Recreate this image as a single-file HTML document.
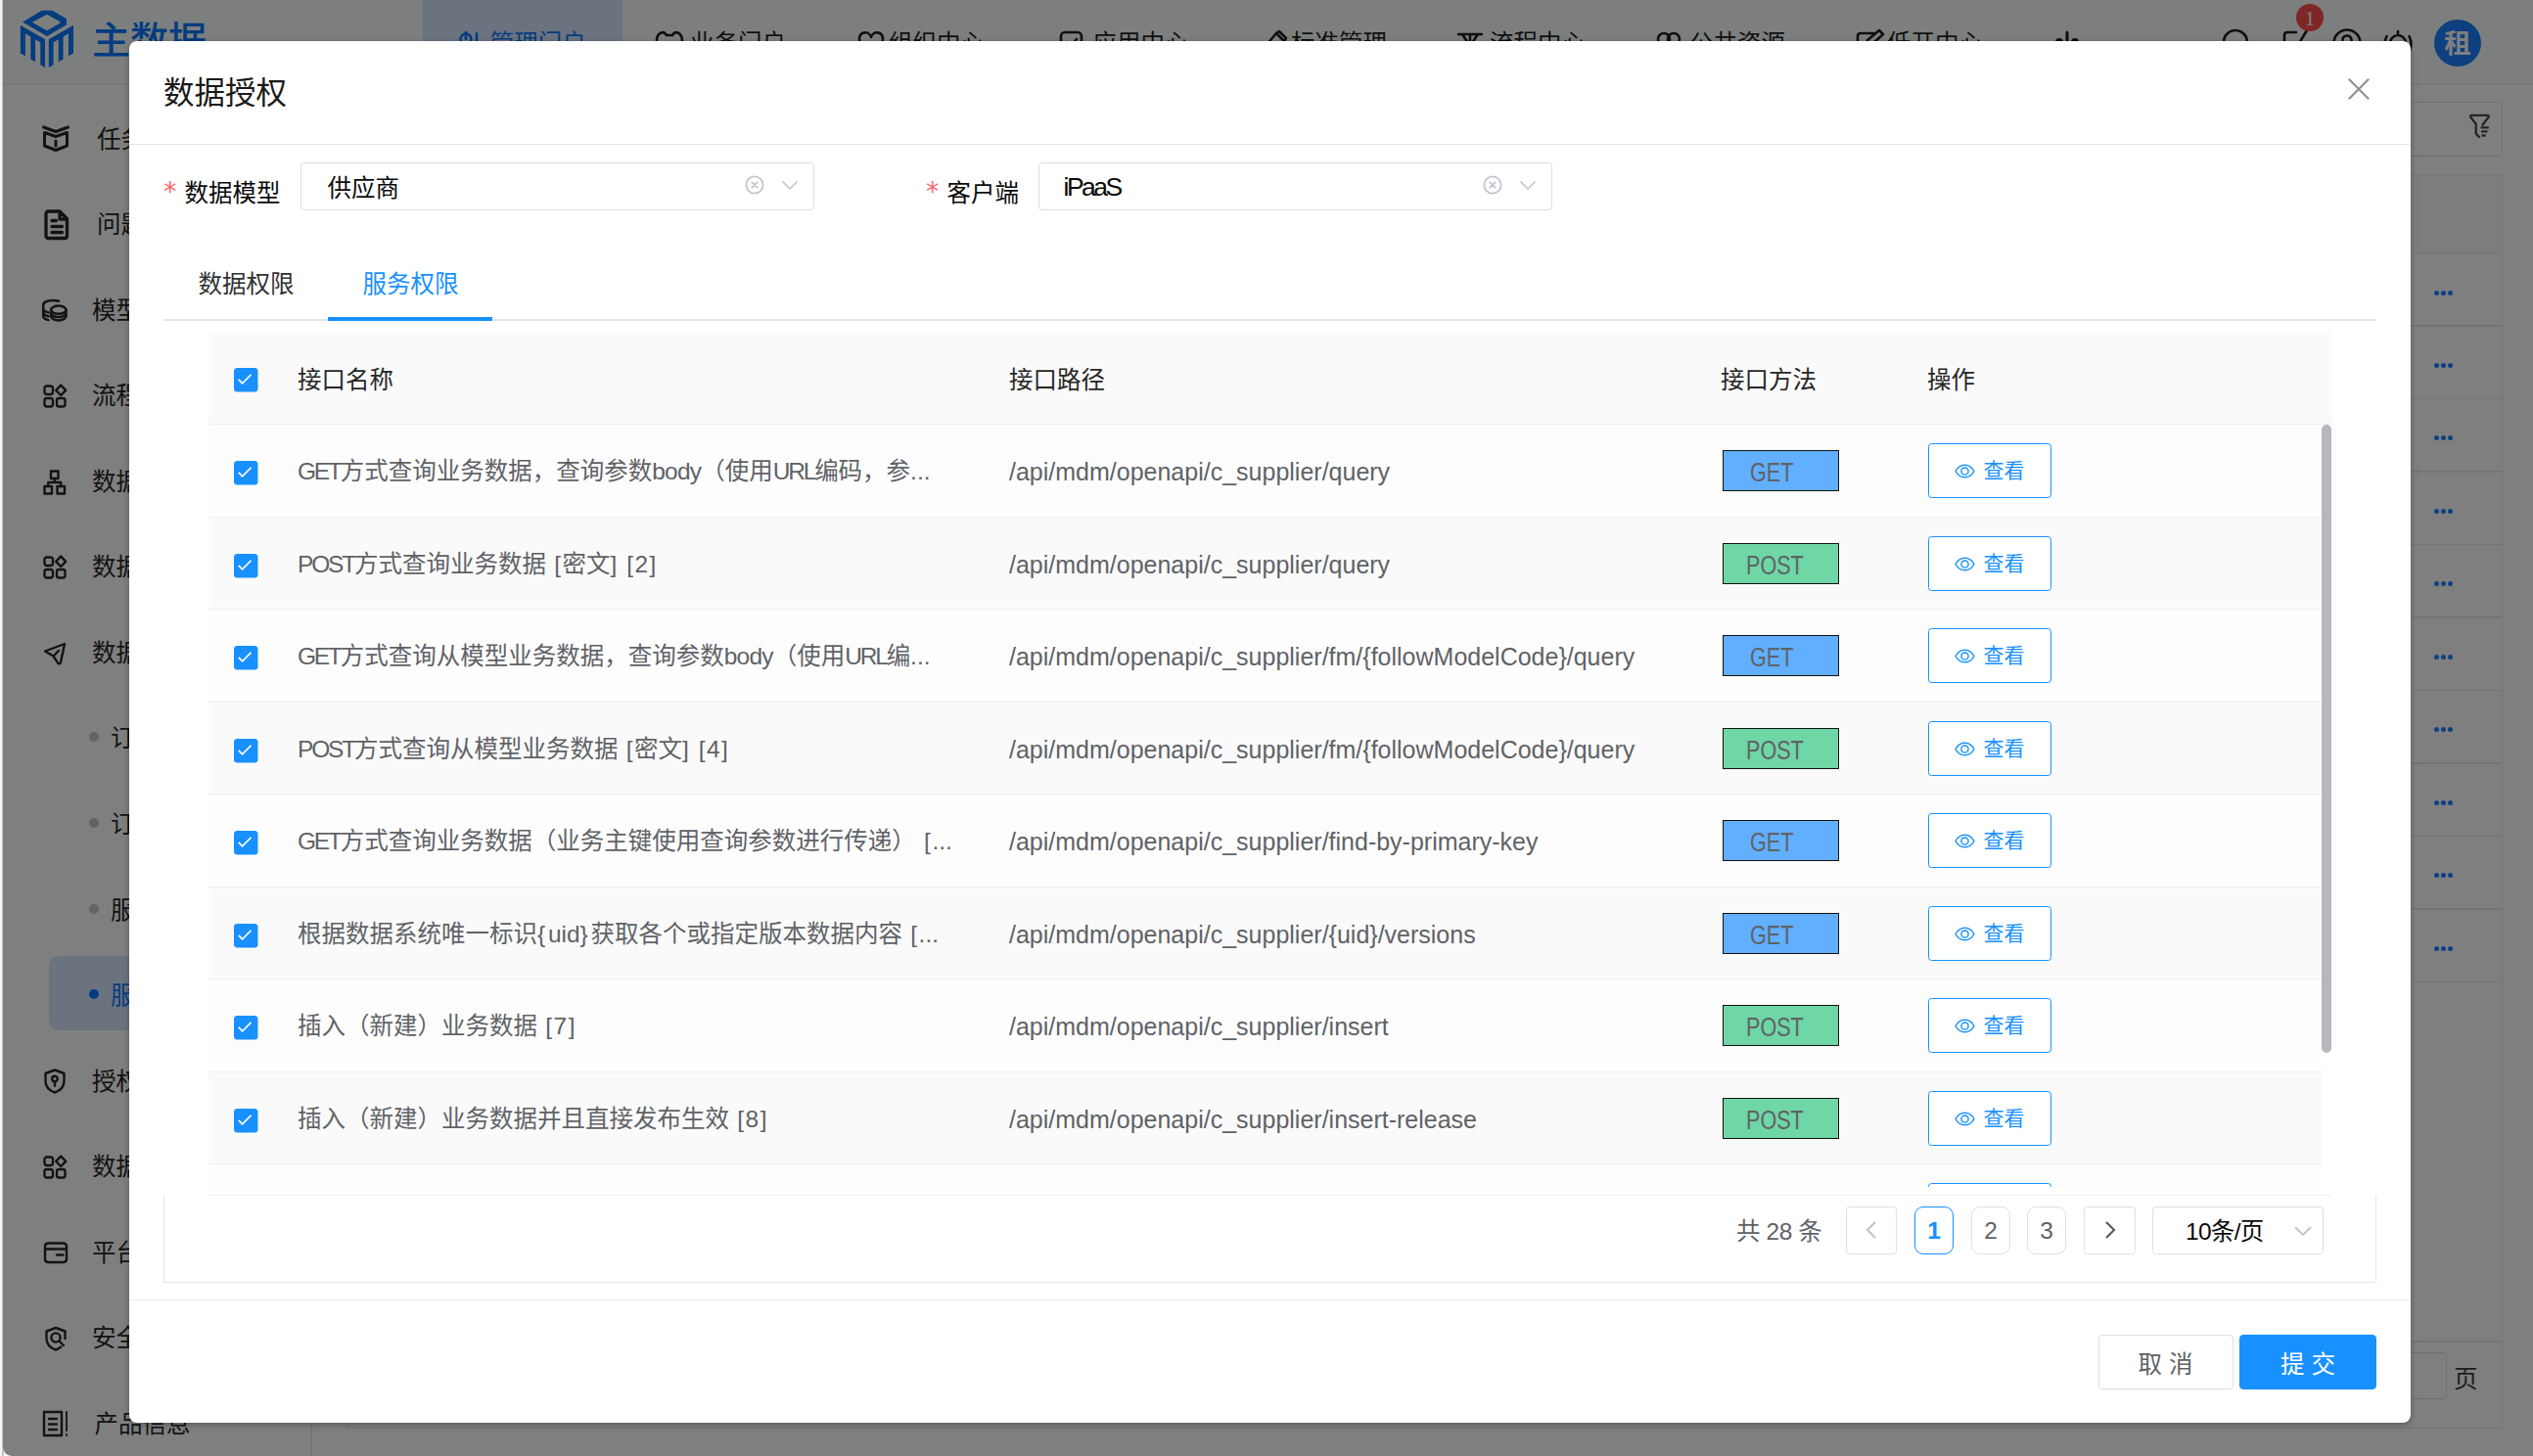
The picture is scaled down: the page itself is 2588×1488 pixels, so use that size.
<!DOCTYPE html>
<html lang="zh-CN">
<head>
<meta charset="utf-8">
<title>数据授权</title>
<style>
*{box-sizing:border-box;margin:0;padding:0}
html,body{width:2588px;height:1488px;overflow:hidden;background:#fff}
body{font-family:"Liberation Sans","Noto Sans CJK SC",sans-serif;font-size:24.5px;color:#303133;position:relative}
.abs{position:absolute}
svg{display:block;overflow:visible}
/* ---------- background app ---------- */
#app{position:absolute;left:3px;top:0;width:2585px;height:1488px;background:#fff;overflow:hidden;border-bottom-left-radius:9px}
#edge{position:absolute;left:0;top:0;width:4px;height:1488px;background:#f4f4f4;border-right:2.500px solid #c2c2c2}
#hdr{position:absolute;left:0;top:0;width:2585px;height:86px;background:#fbfffd;border-bottom:1.500px solid #e4e4e4}
#brand{position:absolute;left:91px;top:12.500px;font-size:39px;font-weight:500;color:#0a78ff;line-height:57px;white-space:nowrap;letter-spacing:0}
.nav{position:absolute;top:0;height:84px;width:204px;white-space:nowrap;font-size:24.5px;color:#1f1f1f;line-height:84px}
.nav.on{background:#d6e6fe;color:#0a78ff}
.nav span{position:absolute;top:3.400px}
.nav svg{position:absolute}
#side{position:absolute;left:0;top:87.500px;width:316px;height:1402px;background:#fff;border-right:2px solid #ececec}
.mi{position:absolute;left:0;width:316px;height:87.4px;line-height:87.4px;font-size:24.5px;color:#262626;white-space:nowrap}
.mi span{position:absolute;left:92px;top:0}
.mi svg{position:absolute;left:39px;top:29px}
.mi.sub{font-size:24.5px}
.mi.sub span{left:110px}
.mi.sub i{position:absolute;left:88px;top:37px;width:10px;height:10px;border-radius:50%;background:#c6c6c6}
.mi.cur{color:#0a78ff}
.mi.cur i{background:#0a78ff}
#curbg{position:absolute;left:47px;top:889.500px;width:262px;height:75.5px;border-radius:10px;background:#d6e6fe}
.dots{width:20px;height:5px}.dots i{position:absolute;top:0;width:5px;height:5px;border-radius:50%;background:#1a82ff}.dots i:nth-child(1){left:0}.dots i:nth-child(2){left:7px}.dots i:nth-child(3){left:14px}
/* ---------- overlay + modal ---------- */
#mask{position:absolute;left:3px;top:0;width:2585px;height:1488px;background:rgba(0,0,0,.5);border-bottom-left-radius:9px}
#dlg{position:absolute;left:132px;top:42px;width:2331px;height:1412px;background:#fff;border-radius:8px;box-shadow:0 2px 6px rgba(0,0,0,.3);overflow:hidden;color:#000}

.ttl{font-size:31.500px;line-height:50px;color:#1a1a1a;white-space:nowrap}
.hl{height:1.500px;background:#e4e7ed}
.lbl{font-size:24.500px;line-height:49px;color:#0a0a0a;white-space:nowrap;padding-top:7px;padding-left:21.500px}
.lbl b{position:absolute;left:0;top:5px;color:#f56c6c;font-weight:400;font-size:27px;font-family:"DejaVu Sans","Liberation Sans",sans-serif}
.sel{width:525px;height:49px;border:1.500px solid #dcdfe4;border-radius:3.500px;font-size:24.500px;line-height:46px;color:#0a0a0a}
.sel span{position:absolute;left:26.500px;top:2.500px;white-space:nowrap}
.tab{font-size:24.500px;line-height:50px;color:#303133;white-space:nowrap}
.tab.on{color:#1890ff}

.tr{position:absolute;left:0;width:2159px;height:94.500px;background:#fdfdfe;border-bottom:1px solid #ebeef5;font-size:24.500px;color:#606266;white-space:nowrap}
.tr.ev{background:#fafafa}
.tr.th{background:#fafafa;color:#262626}
.tr>div{position:absolute;top:-1px;height:94px;line-height:97px;overflow:hidden}
.th>div{top:0}
.u{letter-spacing:-2.200px}.w{letter-spacing:-.800px}.k{letter-spacing:1.500px}
.c0{left:26px;width:30px}
.ck{position:absolute;left:0;top:38px}
.th .ck{top:36px}
.c1{left:91px;width:700px}
.c2{left:818px;width:720px}
.tr:not(.th) .c2{font-size:25px;line-height:98px}
.c3{left:1545px;width:200px}
.c4{left:1756px;width:300px}
.tag{position:absolute;left:2px;top:27px;width:119px;height:42px;border:1.300px solid #111;font-size:27px;line-height:42px;color:#606266;white-space:nowrap}
.tag b{position:absolute;left:0;top:1px;font-weight:400;transform:scaleX(.8);transform-origin:0 50%}
.tag.get{background:#61affe}
.tag.get b{left:26.500px}
.tag.post{background:#6fd6a6}
.tag.post b{left:23px}
.vb{position:absolute;left:1px;top:20px;width:126px;height:56px;border:1.500px solid #1890ff;border-radius:3.500px;background:#fff;color:#1890ff;font-size:21px;line-height:53px}
.vb svg{position:absolute;left:26px;top:16.500px}
.vb em{position:absolute;left:55.500px;top:0;font-style:normal}

.pg-t{font-size:24.500px;line-height:52px;letter-spacing:-.400px;margin-left:-1px;color:#606266;white-space:nowrap}
.pg-b{height:49px;border:1.500px solid #dcdfe6;border-radius:9px;font-size:24.500px;line-height:47.500px;text-align:center;color:#606266;background:#fff}
.pg-b.on{border-color:#1890ff;color:#1890ff;font-weight:700}
.pg-b svg{margin:13px auto 0}
.pg-b.ar{border-radius:3.500px}
.pg-s{width:175px;height:49px;border:1.500px solid #dcdfe6;border-radius:3.500px;font-size:24.500px;line-height:50px;letter-spacing:-.700px;color:#0a0a0a}
.pg-s span{position:absolute;left:33px;top:0;white-space:nowrap}
.btn{height:56px;border:1.500px solid #dcdfe6;border-radius:4px;background:#fff;color:#606266;font-size:24.500px;line-height:59.500px;text-align:center;white-space:nowrap;overflow:hidden}
.btn.pri{background:#1890ff;border-color:#1890ff;color:#fff}
</style>
</head>
<body>
<div id="edge"></div>
<div id="app">
  <div id="hdr">
<svg class="abs" style="left:7px;top:0" width="80" height="85" viewBox="0 0 920.8 978.35" fill="#0a78ff">
<path d="M125,295 L415,462 L415,795 L360,763 L360,497 L300,463 L300,728 L245,696 L245,431 L183,395 L183,660 L125,627 Z"/>
<path d="M748,295 L458,462 L458,795 L513,763 L513,497 L573,463 L573,728 L628,696 L628,431 L690,395 L690,660 L748,627 Z"/>
<path fill-rule="evenodd" d="M150,258 L375,125 L500,125 L668,222 L668,292 L437,425 Z M262,262 L437,360 L592,270 L592,255 L437,170 Z"/>
</svg>
<div id="brand">主数据</div>
<div class="nav on" style="left:429.0px"><svg style="left:37.0px;top:29px" width="30" height="30" viewBox="0 0 30 30" fill="none" stroke="#0a78ff" stroke-width="2.600" stroke-linecap="round" stroke-linejoin="round"><circle cx="7" cy="11" r="5.500"/><path d="M7 4v7M18 5v20h7" /></svg><span style="left:68.7px">管理门户</span></div>
<div class="nav" style="left:632.6px"><svg style="left:33.4px;top:29px" width="30" height="30" viewBox="0 0 30 30" fill="none" stroke="#1f1f1f" stroke-width="2.600" stroke-linecap="round" stroke-linejoin="round"><path d="M2 13c0-9 7-11 10-6h6c3-5 10-3 10 6v8c0 4-3 6-6 6H8c-3 0-6-2-6-6z" /></svg><span style="left:69.4px">业务门户</span></div>
<div class="nav" style="left:836.0px"><svg style="left:37.0px;top:29px" width="30" height="30" viewBox="0 0 30 30" fill="none" stroke="#1f1f1f" stroke-width="2.600" stroke-linecap="round" stroke-linejoin="round"><path d="M14 9C12 2 2 3 2 11c0 8 12 14 12 14s12-6 12-14c0-8-10-9-12-2z" /></svg><span style="left:69.0px">组织中心</span></div>
<div class="nav" style="left:1040.0px"><svg style="left:38.5px;top:29px" width="30" height="30" viewBox="0 0 30 30" fill="none" stroke="#1f1f1f" stroke-width="2.600" stroke-linecap="round" stroke-linejoin="round"><rect x="2" y="4" width="21" height="21" rx="4"/><path d="M8 14l4 4 6-7"/></svg><span style="left:73.5px">应用中心</span></div>
<div class="nav" style="left:1243.0px"><svg style="left:44.0px;top:29px" width="30" height="30" viewBox="0 0 30 30" fill="none" stroke="#1f1f1f" stroke-width="2.600" stroke-linecap="round" stroke-linejoin="round"><path d="M3 18L14 5l8 8L11 26z M14 5l3-2 7 7-2 3"/></svg><span style="left:73.0px">标准管理</span></div>
<div class="nav" style="left:1447.0px"><svg style="left:38.0px;top:29px" width="30" height="30" viewBox="0 0 30 30" fill="none" stroke="#1f1f1f" stroke-width="2.600" stroke-linecap="round" stroke-linejoin="round"><path d="M2 6h24M6 6l6 9-6 9M22 6l-6 9 6 9M14 6v20"/></svg><span style="left:72.0px">流程中心</span></div>
<div class="nav" style="left:1650.0px"><svg style="left:38.0px;top:29px" width="30" height="30" viewBox="0 0 30 30" fill="none" stroke="#1f1f1f" stroke-width="2.600" stroke-linecap="round" stroke-linejoin="round"><circle cx="9" cy="11" r="6"/><circle cx="19" cy="11" r="6"/><path d="M1 27c0-6 4-9 8-9M27 27c0-6-4-9-8-9"/></svg><span style="left:73.0px">公共资源</span></div>
<div class="nav" style="left:1854.0px"><svg style="left:38.0px;top:29px" width="30" height="30" viewBox="0 0 30 30" fill="none" stroke="#1f1f1f" stroke-width="2.600" stroke-linecap="round" stroke-linejoin="round"><path d="M20 5H6c-2 0-3 1-3 3v14c0 2 1 3 3 3h14c2 0 3-1 3-3V14M12 17l1-5L25 2l4 4-11 10z"/></svg><span style="left:71.0px">低开中心</span></div>
<svg class="abs" style="left:2095px;top:29px" width="30" height="30" viewBox="0 0 30 30" fill="none" stroke="#1f1f1f" stroke-width="3" stroke-linecap="round"><circle cx="6" cy="14" r="2.5"/><path d="M14 4v22"/><circle cx="22" cy="14" r="2.5"/></svg>
<svg class="abs" style="left:2267px;top:29px" width="34" height="34" viewBox="0 0 34 34" fill="none" stroke="#1f1f1f" stroke-width="2.600" stroke-linecap="round"><circle cx="14" cy="14" r="12"/><path d="M23 23l7 7"/></svg>
<svg class="abs" style="left:2328px;top:31px" width="34" height="34" viewBox="0 0 34 34" fill="none" stroke="#1f1f1f" stroke-width="2.600" stroke-linecap="round" stroke-linejoin="round"><path d="M15 2H6c-2 0-3 1-3 3v20c0 2 1 3 3 3h18c2 0 3-1 3-3V15M26 0L18 13"/></svg>
<div class="abs" style="left:2343px;top:4px;width:28px;height:28px;border-radius:14px;background:#ff4d4f;color:#fff;font-size:21px;line-height:30px;text-align:center;font-family:'Liberation Serif','Liberation Sans',serif">1</div>
<svg class="abs" style="left:2380px;top:29px" width="34" height="34" viewBox="0 0 34 34" fill="none" stroke="#1f1f1f" stroke-width="2.600" stroke-linecap="round"><circle cx="15" cy="15" r="13.500"/><path d="M10.500 12a4.500 4.500 0 1 1 6.500 4c-1.500 .8-2 1.500-2 3.500"/><circle cx="15" cy="24" r=".8"/></svg>
<svg class="abs" style="left:2432px;top:29px" width="30" height="34" viewBox="0 0 30 34" fill="none" stroke="#1f1f1f" stroke-width="2.600" stroke-linecap="round"><path d="M7 24V15a8 8 0 0 1 16 0v9M5 25h20M15 3v3M3.500 8c-2.500 5-2.500 11 0 16M26.500 8c2.500 5 2.500 11 0 16"/></svg>
<div class="abs" style="left:2484px;top:20px;width:48px;height:48px;border-radius:24px;background:#1c7fff;color:#fff;font-size:27.500px;font-weight:700;line-height:49px;text-align:center">租</div>
</div>
  <div id="side">
<div id="curbg"></div>
<div class="mi" style="top:11.3px"><svg style="left:40.300px;top:29.700px" width="28" height="28" viewBox="0 0 28 28" fill="none" stroke="#262626" stroke-width="3" stroke-linecap="round" stroke-linejoin="round"><path d="M1.500 2L14 6.500 26.500 2M2.500 7.500L14 11.500l11.500-4V21L14 25.500 2.500 21zM14 16v5"/></svg><span style="left:96px">任务中心</span></div>
<div class="mi" style="top:98.8px"><svg style="left:42px;top:27.7px" width="26" height="32" viewBox="0 0 26 32" fill="none" stroke="#262626" stroke-width="3.300" stroke-linecap="round" stroke-linejoin="round"><path d="M2 4.500c0-1.500 1-2.500 2.500-2.500H16l7.500 7.500V27c0 1.500-1 2.500-2.500 2.500H4.500C3 29.500 2 28.500 2 27zM16 2.500V10h7M8 11.500h4.500M8 17.500h10.500M8 23.500h10.500"/></svg><span style="left:96px">问题管理</span></div>
<div class="mi" style="top:186.3px"><svg style="left:40.200px;top:32.200px" width="26" height="23" viewBox="0 0 26 23" fill="none" stroke="#262626" stroke-width="2.500" stroke-linecap="round" stroke-linejoin="round"><ellipse cx="16.800" cy="10.700" rx="7.700" ry="4.100"/><path d="M9.100 10.700v6.600c0 2.300 3.400 4.100 7.700 4.100s7.700-1.800 7.700-4.100v-6.600M9.100 14c0 2.300 3.400 4.100 7.700 4.100s7.700-1.800 7.700-4.100M17 1.700C15.500 1.200 13.500 1 11.500 1 5.500 1 1.200 2.800 1.200 5.500v11.500c0 1.800 2 3.300 5.300 4.100M1.200 9.400c0 1.700 2 3.200 5.300 4M1.200 13.200c0 1.700 2 3.200 5.300 4"/></svg><span style="left:91px">模型管理</span></div>
<div class="mi" style="top:273.9px"><svg style="left:41px;top:31.7px" width="24" height="24" viewBox="0 0 24 24" fill="none" stroke="#262626" stroke-width="2.400" stroke-linecap="round" stroke-linejoin="round"><rect x="1.5" y="1.5" width="8.5" height="8.5" rx="2.2"/><rect x="1.5" y="14" width="8.5" height="8.5" rx="2.2"/><rect x="14" y="14" width="8.5" height="8.5" rx="2.2"/><path d="M18.2 0.6l5 5.2-5 5.2-5-5.200z"/></svg><span style="left:91px">流程管理</span></div>
<div class="mi" style="top:361.4px"><svg style="left:41px;top:30.7px" width="24" height="26" viewBox="0 0 24 26" fill="none" stroke="#262626" stroke-width="2.400" stroke-linecap="round" stroke-linejoin="round"><rect x="8" y="1.500" width="7.500" height="7.500"/><rect x="1.500" y="17" width="7.500" height="7.500"/><rect x="14.500" y="17" width="7.500" height="7.500"/><path d="M11.800 9v4M5.200 17v-4h13v4"/></svg><span style="left:91px">数据管理</span></div>
<div class="mi" style="top:448.9px"><svg style="left:41px;top:31.7px" width="24" height="24" viewBox="0 0 24 24" fill="none" stroke="#262626" stroke-width="2.400" stroke-linecap="round" stroke-linejoin="round"><rect x="1.5" y="1.5" width="8.5" height="8.5" rx="2.2"/><rect x="1.5" y="14" width="8.5" height="8.5" rx="2.2"/><rect x="14" y="14" width="8.5" height="8.5" rx="2.2"/><path d="M18.2 0.6l5 5.2-5 5.2-5-5.200z"/></svg><span style="left:91px">数据质量</span></div>
<div class="mi" style="top:536.4px"><svg style="left:41px;top:31.7px" width="24" height="24" viewBox="0 0 24 24" fill="none" stroke="#262626" stroke-width="2.400" stroke-linecap="round" stroke-linejoin="round"><path d="M2 9.500L22 2l-4 19c-.3 1.400-2 1.700-2.800.6L10.500 14.500zM10.500 14.500L16 9"/></svg><span style="left:91px">数据服务</span></div>
<div class="mi sub" style="top:623.9px"><i></i><span>订阅管理</span></div>
<div class="mi sub" style="top:711.5px"><i></i><span>订阅日志</span></div>
<div class="mi sub" style="top:799.0px"><i></i><span>服务管理</span></div>
<div class="mi sub cur" style="top:886.5px"><i></i><span>服务授权</span></div>
<div class="mi" style="top:974.0px"><svg style="left:41px;top:30.7px" width="24" height="26" viewBox="0 0 24 26" fill="none" stroke="#262626" stroke-width="2.400" stroke-linecap="round" stroke-linejoin="round"><path d="M12 1.500l9.500 3.500v8c0 5.500-4 9.500-9.500 11.500C6.500 22.500 2.500 18.500 2.500 13V5z"/><circle cx="12" cy="10.500" r="2.800"/><path d="M12 13.300v4.500"/></svg><span style="left:91px">授权管理</span></div>
<div class="mi" style="top:1061.5px"><svg style="left:41px;top:31.7px" width="24" height="24" viewBox="0 0 24 24" fill="none" stroke="#262626" stroke-width="2.400" stroke-linecap="round" stroke-linejoin="round"><rect x="1.5" y="1.5" width="8.5" height="8.5" rx="2.2"/><rect x="1.5" y="14" width="8.5" height="8.5" rx="2.2"/><rect x="14" y="14" width="8.5" height="8.5" rx="2.2"/><path d="M18.2 0.6l5 5.2-5 5.2-5-5.200z"/></svg><span style="left:91px">数据安全</span></div>
<div class="mi" style="top:1149.1px"><svg style="left:41px;top:31.7px" width="26" height="24" viewBox="0 0 26 24" fill="none" stroke="#262626" stroke-width="2.400" stroke-linecap="round" stroke-linejoin="round"><path d="M2 6c0-2 1.500-3.500 3.500-3.500h15c2 0 3.500 1.500 3.500 3.500v12.500c0 2-1.500 3.500-3.500 3.500h-15C3.500 22 2 20.500 2 18.500zM2 8.500h22M14 14.500h6.500"/></svg><span style="left:91px">平台配置</span></div>
<div class="mi" style="top:1236.6px"><svg style="left:41px;top:30.7px" width="26" height="26" viewBox="0 0 26 26" fill="none" stroke="#262626" stroke-width="2.400" stroke-linecap="round" stroke-linejoin="round"><path d="M22.500 13V5.500L13 2 3.500 5.500V13c0 5.500 4 9.500 9.500 11.500 2-.7 3.800-1.800 5.300-3.100"/><circle cx="13" cy="12" r="4.600"/><path d="M16.500 15.500l4.500 4.500"/></svg><span style="left:91px">安全管理</span></div>
<div class="mi" style="top:1324.1px"><svg style="left:40px;top:29.7px" width="28" height="28" viewBox="0 0 28 28" fill="none" stroke="#262626" stroke-width="2.400" stroke-linecap="round" stroke-linejoin="round"><path d="M2 2h18v24H2zM7 9h8M7 14.500h8M7 20h8"/><path stroke-width="1.800" d="M25 2v19M25 25v1"/></svg><span style="left:93.500px">产品信息</span></div>
</div>
  <div class="abs" style="left:351px;top:104px;width:2203px;height:56px;border:1px solid #dcdfe6;border-radius:5px"></div>
<svg class="abs" style="left:2520px;top:116px" width="21.600" height="27" viewBox="0 0 24 30" fill="none" stroke="#4a4a4a" stroke-width="2.600" stroke-linecap="round" stroke-linejoin="round"><path d="M2.500 2h18c1.200 0 1.800 1.400 1 2.300L15 13M7.500 12L1.500 4.300C.8 3.400 1.300 2 2.500 2M7.500 12v11l3.500 3.500M14 16h7M14.500 20.500h5M15 25h2.500"/></svg>
<div class="abs" style="left:351px;top:178px;width:2203px;height:826px;border:1px solid #e6e8ef;background:#fff"></div>
<div class="abs" style="left:351px;top:178px;width:2203px;height:81px;background:#fafafa;border:1px solid #e6e8ef"></div>
<div class="abs" style="left:351px;top:332.4px;width:2203px;height:1.500px;background:#e6e8ef"></div>
<div class="abs dots" style="left:2483.500px;top:296.5px"><i></i><i></i><i></i></div>
<div class="abs" style="left:351px;top:406.9px;width:2203px;height:1.500px;background:#e6e8ef"></div>
<div class="abs dots" style="left:2483.500px;top:370.9px"><i></i><i></i><i></i></div>
<div class="abs" style="left:351px;top:481.3px;width:2203px;height:1.500px;background:#e6e8ef"></div>
<div class="abs dots" style="left:2483.500px;top:445.4px"><i></i><i></i><i></i></div>
<div class="abs" style="left:351px;top:555.8px;width:2203px;height:1.500px;background:#e6e8ef"></div>
<div class="abs dots" style="left:2483.500px;top:519.9px"><i></i><i></i><i></i></div>
<div class="abs" style="left:351px;top:630.2px;width:2203px;height:1.500px;background:#e6e8ef"></div>
<div class="abs dots" style="left:2483.500px;top:594.3px"><i></i><i></i><i></i></div>
<div class="abs" style="left:351px;top:704.7px;width:2203px;height:1.500px;background:#e6e8ef"></div>
<div class="abs dots" style="left:2483.500px;top:668.8px"><i></i><i></i><i></i></div>
<div class="abs" style="left:351px;top:779.2px;width:2203px;height:1.500px;background:#e6e8ef"></div>
<div class="abs dots" style="left:2483.500px;top:743.2px"><i></i><i></i><i></i></div>
<div class="abs" style="left:351px;top:853.6px;width:2203px;height:1.500px;background:#e6e8ef"></div>
<div class="abs dots" style="left:2483.500px;top:817.6px"><i></i><i></i><i></i></div>
<div class="abs" style="left:351px;top:928.1px;width:2203px;height:1.500px;background:#e6e8ef"></div>
<div class="abs dots" style="left:2483.500px;top:892.1px"><i></i><i></i><i></i></div>
<div class="abs" style="left:351px;top:1002.5px;width:2203px;height:1.500px;background:#e6e8ef"></div>
<div class="abs dots" style="left:2483.500px;top:966.6px"><i></i><i></i><i></i></div>
<div class="abs" style="left:351px;top:1004px;width:2203px;height:456px;border:1px solid #e6e8ef;border-top:none"></div>
<div class="abs" style="left:351px;top:1370px;width:2203px;height:1.500px;background:#e6e8ef"></div>
<div class="abs" style="left:2404px;top:1382px;width:93px;height:48px;border:1px solid #dcdfe6;border-radius:3.500px;font-size:24.500px;line-height:46px;text-align:center;color:#303133">1</div>
<div class="abs" style="left:2504px;top:1382px;font-size:24.500px;line-height:55px;color:#404040">页</div>
</div>
<div id="mask"></div>
<div id="dlg">
<div class="abs ttl" style="left:35.0px;top:28.0px">数据授权</div>
<svg class="abs" style="left:2267.0px;top:38.0px" width="22" height="22" viewBox="0 0 22 22" fill="none" stroke="#909399" stroke-width="2.300"><path d="M0.800 0.800L21.200 21.200M21.200 0.800L0.800 21.200"/></svg>
<div class="abs hl" style="left:0;top:104.5px;width:2331px"></div>
<div class="abs lbl" style="left:35.0px;top:124.0px"><b>*</b>数据模型</div>
<div class="abs sel" style="left:175.0px;top:124.0px"><span>供应商</span><svg class="abs" style="left:453px;top:11.500px" width="20" height="20" viewBox="0 0 20 20" fill="none" stroke="#c0c4cc" stroke-width="1.800" stroke-linecap="round"><circle cx="10" cy="10" r="8.600"/><path d="M7.300 7.300l5.400 5.400M12.700 7.300l-5.400 5.400"/></svg><svg class="abs" style="left:491px;top:18px" width="16" height="9" viewBox="0 0 16 9" fill="none" stroke="#c0c4cc" stroke-width="1.700" stroke-linecap="round" stroke-linejoin="round"><path d="M1 1l7 7 7-7"/></svg></div>
<div class="abs lbl" style="left:814.0px;top:124.0px"><b>*</b>客户端</div>
<div class="abs sel" style="left:929.0px;top:124.0px"><span style="font-size:26.500px;letter-spacing:-2.500px;top:1px;left:24.500px">iPaaS</span><svg class="abs" style="left:453px;top:11.500px" width="20" height="20" viewBox="0 0 20 20" fill="none" stroke="#c0c4cc" stroke-width="1.800" stroke-linecap="round"><circle cx="10" cy="10" r="8.600"/><path d="M7.300 7.300l5.400 5.400M12.700 7.300l-5.400 5.400"/></svg><svg class="abs" style="left:491px;top:18px" width="16" height="9" viewBox="0 0 16 9" fill="none" stroke="#c0c4cc" stroke-width="1.700" stroke-linecap="round" stroke-linejoin="round"><path d="M1 1l7 7 7-7"/></svg></div>
<div class="abs tab" style="left:70.5px;top:224.3px">数据权限</div>
<div class="abs tab on" style="left:238.5px;top:224.3px">服务权限</div>
<div class="abs" style="left:35.0px;top:284.0px;width:2261px;height:2px;background:#e4e7ed"></div>
<div class="abs" style="left:203.0px;top:282.0px;width:168px;height:4px;background:#1890ff"></div>
<div id="tb" class="abs" style="left:81.0px;top:298.0px;width:2169px;height:873px;overflow:hidden">
<div class="tr th" style="top:0;height:94px;width:2169px"><div class="c0"><svg class="ck" width="24.5" height="24.5" viewBox="0 0 24.5 24.5"><rect width="24.5" height="24.5" rx="3.5" fill="#1890ff"/><path d="M4.800 11.800l3.800 4 8.900-9" fill="none" stroke="#fff" stroke-width="1.700"/></svg></div><div class="c1">接口名称</div><div class="c2">接口路径</div><div class="c3">接口方法</div><div class="c4">操作</div></div>
<div class="tr" style="top:94px;height:95px"><div class="c0"><svg class="ck" width="24.5" height="24.5" viewBox="0 0 24.5 24.5"><rect width="24.5" height="24.5" rx="3.5" fill="#1890ff"/><path d="M4.800 11.800l3.800 4 8.900-9" fill="none" stroke="#fff" stroke-width="1.700"/></svg></div><div class="c1"><span class="u">GET</span>方式查询业务数据，查询参数<span class="w">body</span>（使用<span class="u">URL</span>编码，参...</div><div class="c2">/api/mdm/openapi/c_supplier/query</div><div class="c3"><span class="tag get"><b>GET</b></span></div><div class="c4"><span class="vb"><svg width="21" height="21" viewBox="0 0 21 21" fill="none" stroke="#1890ff" stroke-width="1.450"><path d="M1 10.500C3.500 6 6.800 4.200 10.500 4.200S17.500 6 20 10.500C17.500 15 14.200 16.800 10.500 16.800S3.500 15 1 10.500z"/><circle cx="10.500" cy="10.500" r="3.600"/></svg><em>查看</em></span></div></div>
<div class="tr ev" style="top:189px;height:94px"><div class="c0"><svg class="ck" width="24.5" height="24.5" viewBox="0 0 24.5 24.5"><rect width="24.5" height="24.5" rx="3.5" fill="#1890ff"/><path d="M4.800 11.800l3.800 4 8.900-9" fill="none" stroke="#fff" stroke-width="1.700"/></svg></div><div class="c1"><span class="u">POST</span>方式查询业务数据<span class="k"> [</span>密文<span class="k">] [2]</span></div><div class="c2">/api/mdm/openapi/c_supplier/query</div><div class="c3"><span class="tag post"><b>POST</b></span></div><div class="c4"><span class="vb"><svg width="21" height="21" viewBox="0 0 21 21" fill="none" stroke="#1890ff" stroke-width="1.450"><path d="M1 10.500C3.500 6 6.800 4.200 10.500 4.200S17.500 6 20 10.500C17.500 15 14.200 16.800 10.500 16.800S3.500 15 1 10.500z"/><circle cx="10.500" cy="10.500" r="3.600"/></svg><em>查看</em></span></div></div>
<div class="tr" style="top:283px;height:95px"><div class="c0"><svg class="ck" width="24.5" height="24.5" viewBox="0 0 24.5 24.5"><rect width="24.5" height="24.5" rx="3.5" fill="#1890ff"/><path d="M4.800 11.800l3.800 4 8.900-9" fill="none" stroke="#fff" stroke-width="1.700"/></svg></div><div class="c1"><span class="u">GET</span>方式查询从模型业务数据，查询参数<span class="w">body</span>（使用<span class="u">URL</span>编...</div><div class="c2">/api/mdm/openapi/c_supplier/fm/{followModelCode}/query</div><div class="c3"><span class="tag get"><b>GET</b></span></div><div class="c4"><span class="vb"><svg width="21" height="21" viewBox="0 0 21 21" fill="none" stroke="#1890ff" stroke-width="1.450"><path d="M1 10.500C3.500 6 6.800 4.200 10.500 4.200S17.500 6 20 10.500C17.500 15 14.200 16.800 10.500 16.800S3.500 15 1 10.500z"/><circle cx="10.500" cy="10.500" r="3.600"/></svg><em>查看</em></span></div></div>
<div class="tr ev" style="top:378px;height:94px"><div class="c0"><svg class="ck" width="24.5" height="24.5" viewBox="0 0 24.5 24.5"><rect width="24.5" height="24.5" rx="3.5" fill="#1890ff"/><path d="M4.800 11.800l3.800 4 8.900-9" fill="none" stroke="#fff" stroke-width="1.700"/></svg></div><div class="c1"><span class="u">POST</span>方式查询从模型业务数据<span class="k"> [</span>密文<span class="k">] [4]</span></div><div class="c2">/api/mdm/openapi/c_supplier/fm/{followModelCode}/query</div><div class="c3"><span class="tag post"><b>POST</b></span></div><div class="c4"><span class="vb"><svg width="21" height="21" viewBox="0 0 21 21" fill="none" stroke="#1890ff" stroke-width="1.450"><path d="M1 10.500C3.500 6 6.800 4.200 10.500 4.200S17.500 6 20 10.500C17.500 15 14.200 16.800 10.500 16.800S3.500 15 1 10.500z"/><circle cx="10.500" cy="10.500" r="3.600"/></svg><em>查看</em></span></div></div>
<div class="tr" style="top:472px;height:95px"><div class="c0"><svg class="ck" width="24.5" height="24.5" viewBox="0 0 24.5 24.5"><rect width="24.5" height="24.5" rx="3.5" fill="#1890ff"/><path d="M4.800 11.800l3.800 4 8.900-9" fill="none" stroke="#fff" stroke-width="1.700"/></svg></div><div class="c1"><span class="u">GET</span>方式查询业务数据（业务主键使用查询参数进行传递）<span class="k"> [</span>...</div><div class="c2">/api/mdm/openapi/c_supplier/find-by-primary-key</div><div class="c3"><span class="tag get"><b>GET</b></span></div><div class="c4"><span class="vb"><svg width="21" height="21" viewBox="0 0 21 21" fill="none" stroke="#1890ff" stroke-width="1.450"><path d="M1 10.500C3.500 6 6.800 4.200 10.500 4.200S17.500 6 20 10.500C17.500 15 14.200 16.800 10.500 16.800S3.500 15 1 10.500z"/><circle cx="10.500" cy="10.500" r="3.600"/></svg><em>查看</em></span></div></div>
<div class="tr ev" style="top:567px;height:94px"><div class="c0"><svg class="ck" width="24.5" height="24.5" viewBox="0 0 24.5 24.5"><rect width="24.5" height="24.5" rx="3.5" fill="#1890ff"/><path d="M4.800 11.800l3.800 4 8.900-9" fill="none" stroke="#fff" stroke-width="1.700"/></svg></div><div class="c1">根据数据系统唯一标识<span class="k" style="letter-spacing:2.700px">{</span><span>uid</span><span class="k" style="letter-spacing:2.700px">}</span>获取各个或指定版本数据内容<span class="k"> [</span>...</div><div class="c2">/api/mdm/openapi/c_supplier/{uid}/versions</div><div class="c3"><span class="tag get"><b>GET</b></span></div><div class="c4"><span class="vb"><svg width="21" height="21" viewBox="0 0 21 21" fill="none" stroke="#1890ff" stroke-width="1.450"><path d="M1 10.500C3.500 6 6.800 4.200 10.500 4.200S17.500 6 20 10.500C17.500 15 14.200 16.800 10.500 16.800S3.500 15 1 10.500z"/><circle cx="10.500" cy="10.500" r="3.600"/></svg><em>查看</em></span></div></div>
<div class="tr" style="top:661px;height:95px"><div class="c0"><svg class="ck" width="24.5" height="24.5" viewBox="0 0 24.5 24.5"><rect width="24.5" height="24.5" rx="3.5" fill="#1890ff"/><path d="M4.800 11.800l3.800 4 8.900-9" fill="none" stroke="#fff" stroke-width="1.700"/></svg></div><div class="c1">插入（新建）业务数据<span class="k"> [7]</span></div><div class="c2">/api/mdm/openapi/c_supplier/insert</div><div class="c3"><span class="tag post"><b>POST</b></span></div><div class="c4"><span class="vb"><svg width="21" height="21" viewBox="0 0 21 21" fill="none" stroke="#1890ff" stroke-width="1.450"><path d="M1 10.500C3.500 6 6.800 4.200 10.500 4.200S17.500 6 20 10.500C17.500 15 14.200 16.800 10.500 16.800S3.500 15 1 10.500z"/><circle cx="10.500" cy="10.500" r="3.600"/></svg><em>查看</em></span></div></div>
<div class="tr ev" style="top:756px;height:94px"><div class="c0"><svg class="ck" width="24.5" height="24.5" viewBox="0 0 24.5 24.5"><rect width="24.5" height="24.5" rx="3.5" fill="#1890ff"/><path d="M4.800 11.800l3.800 4 8.900-9" fill="none" stroke="#fff" stroke-width="1.700"/></svg></div><div class="c1">插入（新建）业务数据并且直接发布生效<span class="k"> [8]</span></div><div class="c2">/api/mdm/openapi/c_supplier/insert-release</div><div class="c3"><span class="tag post"><b>POST</b></span></div><div class="c4"><span class="vb"><svg width="21" height="21" viewBox="0 0 21 21" fill="none" stroke="#1890ff" stroke-width="1.450"><path d="M1 10.500C3.500 6 6.800 4.200 10.500 4.200S17.500 6 20 10.500C17.500 15 14.200 16.800 10.500 16.800S3.500 15 1 10.500z"/><circle cx="10.500" cy="10.500" r="3.600"/></svg><em>查看</em></span></div></div>
<div class="tr" style="top:850px;height:95px"><div class="c0"><svg class="ck" width="24.5" height="24.5" viewBox="0 0 24.5 24.5"><rect width="24.5" height="24.5" rx="3.5" fill="#1890ff"/><path d="M4.800 11.800l3.800 4 8.900-9" fill="none" stroke="#fff" stroke-width="1.700"/></svg></div><div class="c1">更新业务数据<span class="k"> [9]</span></div><div class="c2">/api/mdm/openapi/c_supplier/update</div><div class="c3"><span class="tag post"><b>POST</b></span></div><div class="c4"><span class="vb"><svg width="21" height="21" viewBox="0 0 21 21" fill="none" stroke="#1890ff" stroke-width="1.450"><path d="M1 10.500C3.500 6 6.800 4.200 10.500 4.200S17.500 6 20 10.500C17.500 15 14.200 16.800 10.500 16.800S3.500 15 1 10.500z"/><circle cx="10.500" cy="10.500" r="3.600"/></svg><em>查看</em></span></div></div>
<div class="abs" style="left:2159px;top:94px;width:10px;height:642px;border-radius:5px;background:#b7b8be"></div>
</div>
<div class="abs" style="left:81.0px;top:1178.5px;width:2169px;height:1.500px;background:#ebeef5"></div>
<div class="abs" style="left:35.0px;top:1179.0px;width:2261px;height:90px;border:1.500px solid #e4e7ed;border-top:none"></div>
<div class="abs pg-t" style="left:1643.0px;top:1191.0px">共 28 条</div>
<div class="abs pg-b ar" style="left:1754.0px;top:1191.0px;width:52px"><svg width="14" height="20" viewBox="0 0 14 20" fill="none" stroke="#c0c4cc" stroke-width="2.200"><path d="M11 2L3 10l8 8"/></svg></div>
<div class="abs pg-b on" style="left:1824.0px;top:1191.0px;width:40px">1</div>
<div class="abs pg-b" style="left:1882.0px;top:1191.0px;width:40px">2</div>
<div class="abs pg-b" style="left:1939.0px;top:1191.0px;width:40px">3</div>
<div class="abs pg-b ar" style="left:1997.0px;top:1191.0px;width:53px"><svg width="14" height="20" viewBox="0 0 14 20" fill="none" stroke="#55585e" stroke-width="2.100"><path d="M3 2l8 8-8 8"/></svg></div>
<div class="abs pg-s" style="left:2067.0px;top:1191.0px"><span>10条/页</span><svg class="abs" style="left:144px;top:19px" width="18" height="11" viewBox="0 0 18 11" fill="none" stroke="#c0c4cc" stroke-width="1.800" stroke-linecap="round" stroke-linejoin="round"><path d="M1.500 1.500L9 9l7.500-7.500"/></svg></div>
<div class="abs hl" style="left:0;top:1285.5px;width:2331px;background:#ebedf5"></div>
<div class="abs btn" style="left:2011.5px;top:1322px;width:138px">取 消</div>
<div class="abs btn pri" style="left:2156.0px;top:1322px;width:140px">提 交</div>
</div>
</body>
</html>
